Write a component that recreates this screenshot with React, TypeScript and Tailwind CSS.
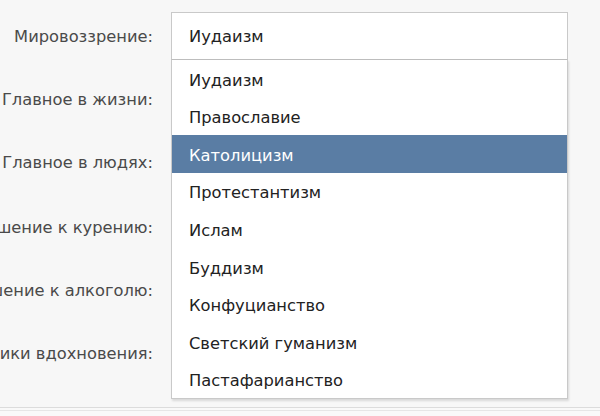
const LABELS = [
  { text: "Мировоззрение:", gap: "h-[63px]" },
  { text: "Главное в жизни:", gap: "h-[63px]" },
  { text: "Главное в людях:", gap: "h-[65px]" },
  { text: "Отношение к курению:", gap: "h-[63px]" },
  { text: "Отношение к алкоголю:", gap: "h-[63px]" },
  { text: "Источники вдохновения:", gap: "h-[63px]" },
];

const OPTIONS = [
  "Иудаизм",
  "Православие",
  "Католицизм",
  "Протестантизм",
  "Ислам",
  "Буддизм",
  "Конфуцианство",
  "Светский гуманизм",
  "Пастафарианство",
];

const ACTIVE = "Католицизм";

export default function App() {
  return (
    <div className="relative h-[416px] w-[600px] overflow-hidden bg-[#f7f7f7] font-['DejaVu_Sans',sans-serif]">
      <div className="flex pt-3">
        {/* Подписи слева */}
        <div className="flex w-[153px] shrink-0 flex-col">
          {LABELS.map(({ text, gap }) => (
            <div key={text} className={`flex items-start justify-end ${gap}`}>
              <span className="mt-[14px] whitespace-nowrap text-[16.3px] leading-[22px] text-[#4a4a4a]">{text}</span>
            </div>
          ))}
        </div>

        {/* Выпадающий список */}
        <div className="relative ml-[18px] w-[397px]">
          <div className="flex h-[48px] items-center border border-[#c9c9c9] bg-white pl-[17px] pt-[2px] text-[16.3px] text-[#222]">
            Иудаизм
          </div>
          <ul className="absolute left-0 top-[47px] w-full border border-[#c9c9c9] border-t-[#bdbdbd] bg-white shadow-[1px_2px_2px_rgba(0,0,0,0.12)]">
            {OPTIONS.map((opt) => (
              <li
                key={opt}
                className={
                  opt === ACTIVE
                    ? "flex h-[37.6px] items-center bg-[#5a7da4] pl-[17px] pt-[4px] text-[16.3px] text-white"
                    : "flex h-[37.6px] items-center pl-[17px] pt-[4px] text-[16.3px] text-[#222]"
                }
              >
                {opt}
              </li>
            ))}
          </ul>
        </div>
      </div>

      {/* Нижняя линия страницы */}
      <div className="absolute bottom-0 left-0 h-[9px] w-full border-t border-[#dcdcdc] bg-[#f9f9f9]">
        <div className="mt-[2px] border-t border-[#e6e6e6]" />
      </div>
    </div>
  );
}
